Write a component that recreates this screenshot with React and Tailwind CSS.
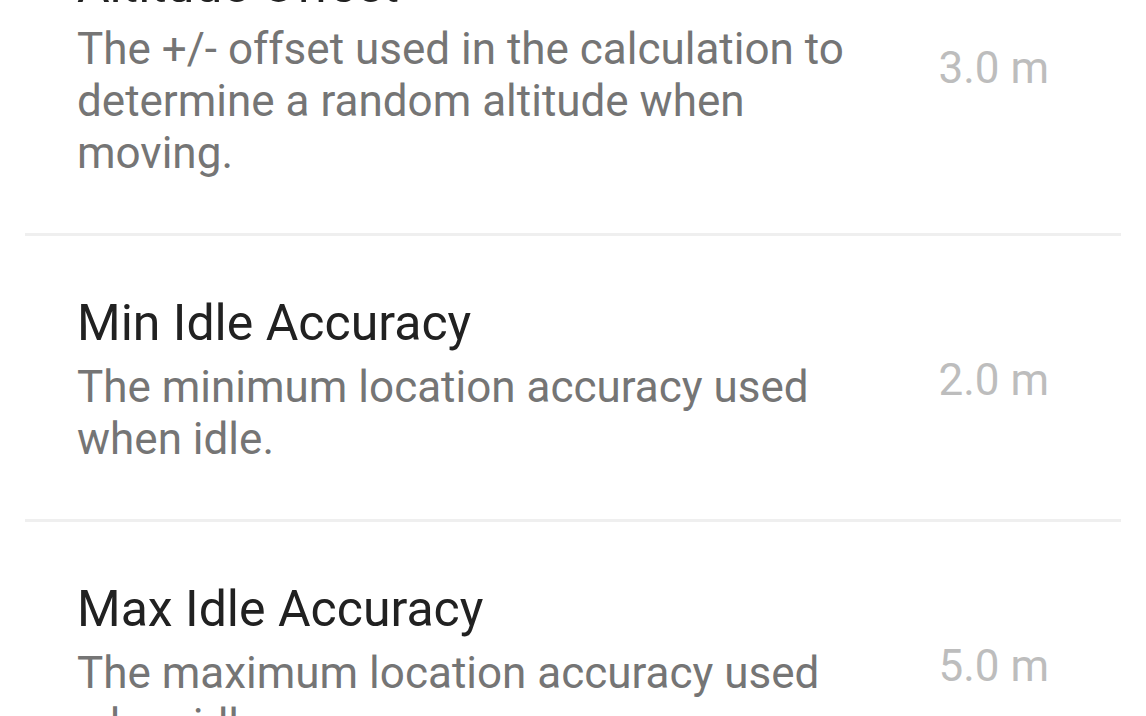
const items = [
  {
    title: 'Altitude Offset',
    desc: 'The +/- offset used in the calculation to determine a random altitude when moving.',
    value: '3.0 m',
  },
  {
    title: 'Min Idle Accuracy',
    desc: 'The minimum location accuracy used when idle.',
    value: '2.0 m',
  },
  {
    title: 'Max Idle Accuracy',
    desc: 'The maximum location accuracy used when idle.',
    value: '5.0 m',
  },
];

function SettingRow({ title, desc, value }) {
  return (
    <div className="flex items-center gap-[40px] pl-[52px] pr-[72px] pt-[58px] pb-[54px]">
      <div className="flex-1 min-w-0">
        <div className="text-[50px] leading-[58px] text-[#212121]">{title}</div>
        <div className="mt-[9px] text-[44px] leading-[52px] text-[#757575]">{desc}</div>
      </div>
      <div className="shrink-0 text-[44px] leading-[52px] text-[#bdbdbd]">{value}</div>
    </div>
  );
}

export default function App() {
  return (
    <div
      className="w-[1146px] h-[716px] overflow-hidden bg-white"
      style={{ fontFamily: 'Roboto, "Noto Sans", sans-serif' }}
    >
      <div className="mx-[25px] -mt-[102px]">
        {items.map((item, i) => (
          <div key={item.title}>
            <SettingRow {...item} />
            {i < items.length - 1 && <div className="h-[3px] bg-[#efefef]" />}
          </div>
        ))}
      </div>
    </div>
  );
}
